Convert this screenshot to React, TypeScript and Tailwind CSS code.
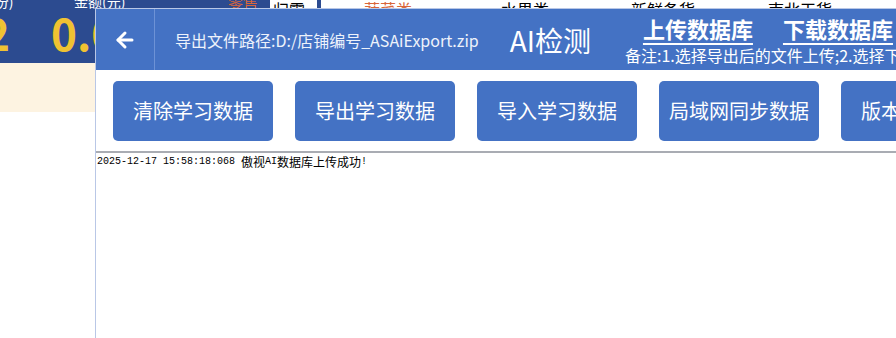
import { ArrowLeft } from "lucide-react";

const buttons = ["清除学习数据", "导出学习数据", "导入学习数据", "局域网同步数据", "版本更新说明"];

const tableHeads = [
  { label: "蔬菜类", x: "ml-[43px]", color: "text-[#d9663a]" },
  { label: "水果类", x: "ml-[89px]", color: "text-black" },
  { label: "新鲜备货", x: "ml-[82px]", color: "text-black" },
  { label: "南北干货", x: "ml-[73px]", color: "text-black" },
];

function Background() {
  return (
    <div className="flex h-full w-full">
      <div className="flex w-[270px] flex-col">
        <div className="relative h-[63px] overflow-hidden bg-[#2c4b90]">
          <span className="absolute left-[-38px] top-[-9px] text-[14px] text-white">数量(份)</span>
          <span className="absolute left-[74px] top-[-9px] text-[14px] text-white">金额(元)</span>
          <span className="absolute left-[228px] top-[-9px] text-[15px] text-[#d9663a]">零售</span>
          <span className="absolute left-[-16px] top-[10px] text-[44px] font-bold leading-none text-[#f0c232]">2</span>
          <span className="absolute left-[51px] top-[10px] text-[44px] font-bold leading-none text-[#f0c232]">0.00</span>
        </div>
        <div className="h-[49px] bg-[#fdf3e1]" />
      </div>
      <div className="flex h-[9px] flex-1 items-end overflow-hidden bg-white">
        <div className="flex items-end whitespace-nowrap text-[16px] leading-none">
          <span className="ml-[3px] mb-[-8px] text-black">归零</span>
          <span className="ml-[12px] h-[9px] w-[4px] self-start bg-[#2c4b90]" />
          {tableHeads.map((h) => (
            <span key={h.label} className={`${h.x} ${h.color} mb-[-8px]`}>
              {h.label}
            </span>
          ))}
        </div>
      </div>
    </div>
  );
}

function Dialog() {
  return (
    <div className="absolute left-[95px] top-[8px] flex h-[330px] w-[1100px] flex-col border-l border-t border-[#b9c7e6] bg-white">
      <div className="flex h-[61px] items-center bg-[#4472c4] text-white">
        <div className="flex h-full w-[59px] shrink-0 items-center justify-center border-r border-[#6d92d6]">
          <ArrowLeft size={24} strokeWidth={3} />
        </div>
        <span className="ml-[20px] shrink-0 whitespace-nowrap text-[16px] text-[#eef2fb]">导出文件路径:D:/店铺编号_ASAiExport.zip</span>
        <span className="ml-[31px] shrink-0 whitespace-nowrap text-[28px] leading-none">AI检测</span>
        <div className="ml-[34px] flex shrink-0 flex-col whitespace-nowrap">
          <div className="flex gap-[30px] pl-[18px] text-[22px] font-bold leading-[26px]">
            <span className="underline underline-offset-[5px]">上传数据库</span>
            <span className="underline underline-offset-[5px]">下载数据库</span>
          </div>
          <span className="mt-[5px] text-[16px] leading-[18px]">备注:1.选择导出后的文件上传;2.选择下载数据库后导入</span>
        </div>
      </div>
      <div className="flex h-[81px] items-center gap-[22px] pl-[17px]">
        {buttons.map((b) => (
          <div
            key={b}
            className="flex h-[60px] w-[160px] shrink-0 items-center justify-center rounded-[5px] bg-[#4472c4] text-[20px] text-white"
          >
            {b}
          </div>
        ))}
      </div>
      <div className="h-[2px] bg-[#a9acb3]" />
      <div className="flex flex-1 items-start whitespace-pre pl-[1px] pt-[2px] text-black">
        <span className="font-['Liberation_Mono'] text-[10px] leading-[14px]">2025-12-17 15:58:18:068 </span>
        <span className="text-[12px] leading-[14px]">傲视</span>
        <span className="font-['Liberation_Mono'] text-[10px] leading-[14px]">AI</span>
        <span className="text-[12px] leading-[14px]">数据库上传成功</span>
        <span className="font-['Liberation_Mono'] text-[10px] leading-[14px]">!</span>
      </div>
    </div>
  );
}

export default function App() {
  return (
    <div className="relative h-[338px] w-[896px] overflow-hidden bg-white font-['Noto_Sans_CJK_SC',sans-serif]">
      <Background />
      <Dialog />
    </div>
  );
}
